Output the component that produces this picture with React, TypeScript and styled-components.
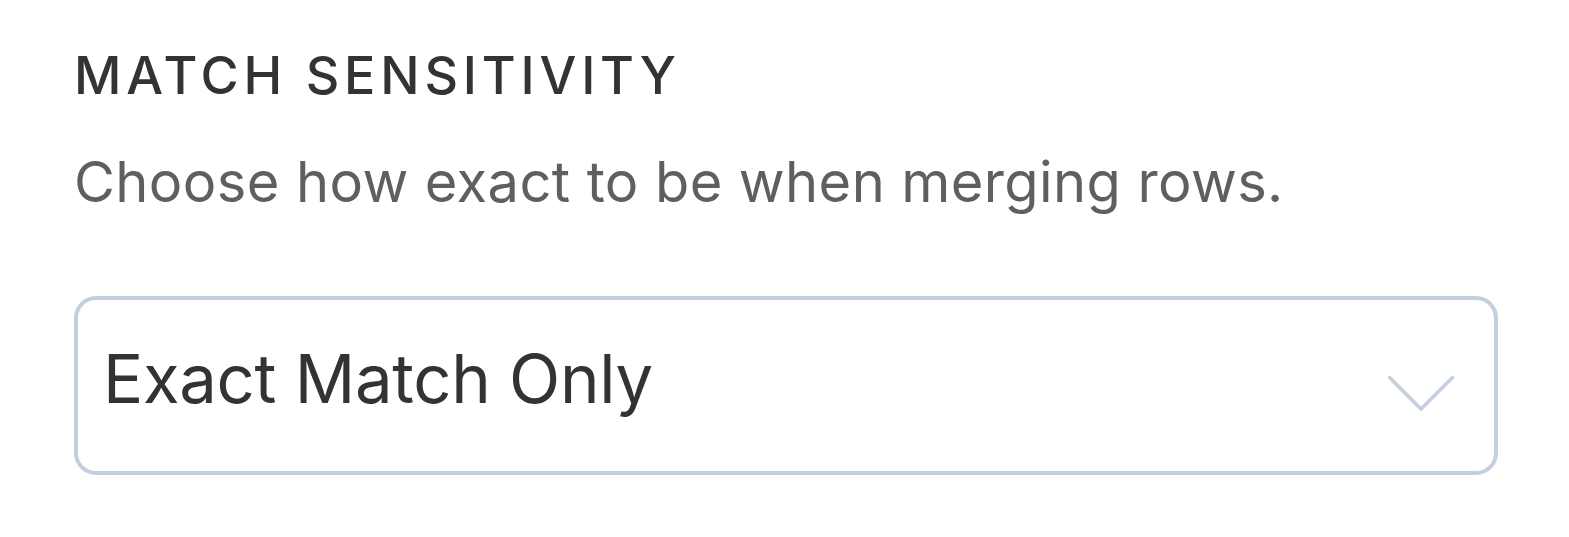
import React from 'react';
import styled, { createGlobalStyle } from 'styled-components';

const GlobalStyle = createGlobalStyle`
  html, body {
    margin: 0;
    padding: 0;
    background: #ffffff;
  }
  body {
    font-family: Inter, "Noto Sans", sans-serif;
  }
`;

const Panel = styled.section`
  display: flex;
  flex-direction: column;
  padding: 45px 71px 0 74px;
`;

const Heading = styled.h2`
  margin: 0;
  font-size: 52px;
  line-height: 1.2;
  font-weight: 500;
  letter-spacing: 4.8px;
  text-transform: uppercase;
  color: #333333;
`;

const Description = styled.p`
  margin: 42px 0 0;
  font-size: 56px;
  line-height: 1.2;
  font-weight: 400;
  letter-spacing: 0.4px;
  color: #5f5f5f;
`;

const SelectBox = styled.div`
  margin-top: 79px;
  height: 179px;
  box-sizing: border-box;
  display: flex;
  align-items: center;
  justify-content: space-between;
  border: 4px solid #c1cfde;
  border-radius: 22px;
  padding: 0 39px 0 25px;
  background: #ffffff;
  cursor: pointer;
`;

const SelectValue = styled.span`
  font-size: 67px;
  line-height: 1.2;
  letter-spacing: -0.3px;
  color: #333333;
  padding-bottom: 12px;
`;

const Chevron = styled.svg`
  margin-top: 16px;
  flex-shrink: 0;
`;

export default function App() {
  return (
    <>
      <GlobalStyle />
      <Panel>
        <Heading>Match Sensitivity</Heading>
        <Description>Choose how exact to be when merging rows.</Description>
        <SelectBox role="combobox" aria-expanded={false}>
          <SelectValue>Exact Match Only</SelectValue>
          <Chevron width="68" height="36" viewBox="0 0 68 36" fill="none">
            <polyline
              points="1.5,1.5 34,34 66.5,1.5"
              stroke="#c1cfde"
              strokeWidth="3.5"
            />
          </Chevron>
        </SelectBox>
      </Panel>
    </>
  );
}
